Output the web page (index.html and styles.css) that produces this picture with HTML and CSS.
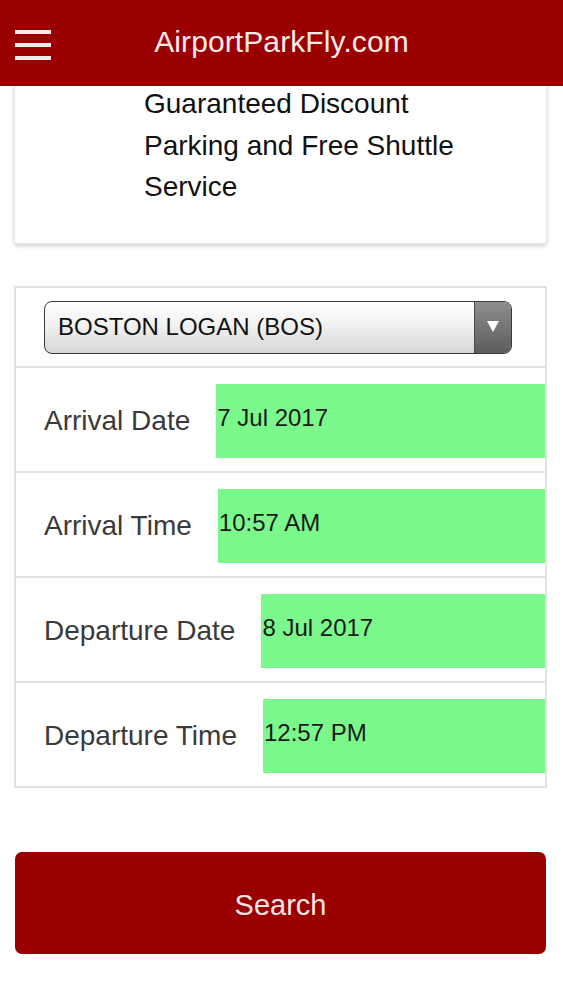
FILE: index.html
```html
<!DOCTYPE html>
<html lang="en">
<head>
    <meta charset="UTF-8">
    <meta name="viewport" content="width=device-width, initial-scale=1.0">
    <title>AirportParkFly.com</title>
    <link rel="stylesheet" href="styles.css">
</head>
<body>
    <header class="topbar">
        <button class="menu-btn" aria-label="Menu">
            <span></span>
            <span></span>
            <span></span>
        </button>
        <div class="brand">AirportParkFly.com</div>
    </header>

    <div class="page">
        <!-- intro card -->
        <div class="intro-card">
            <p class="intro-text">Guaranteed Discount Parking and Free Shuttle Service</p>
        </div>

        <!-- search form -->
        <form class="search-form">
            <div class="select-row">
                <div class="airport-select">
                    <span class="airport-select__value">BOSTON LOGAN (BOS)</span>
                    <span class="airport-select__arrow"></span>
                </div>
            </div>
            <div class="field-row">
                <label class="field-label" for="arrivalDate">Arrival Date</label>
                <input class="field-input" id="arrivalDate" type="text" value="7 Jul 2017" readonly>
            </div>
            <div class="field-row">
                <label class="field-label" for="arrivalTime">Arrival Time</label>
                <input class="field-input" id="arrivalTime" type="text" value="10:57 AM" readonly>
            </div>
            <div class="field-row">
                <label class="field-label" for="departureDate">Departure Date</label>
                <input class="field-input" id="departureDate" type="text" value="8 Jul 2017" readonly>
            </div>
            <div class="field-row">
                <label class="field-label" for="departureTime">Departure Time</label>
                <input class="field-input" id="departureTime" type="text" value="12:57 PM" readonly>
            </div>
        </form>

        <button class="search-btn" type="button">Search</button>
    </div>
</body>
</html>
```

FILE: styles.css
```css
body {
    font-family: "Liberation Sans", Arial, sans-serif;
    margin: 0;
    padding: 0;
    background-color: #fff;
    color: #111;
}

/* header */
.topbar {
    position: relative;
    z-index: 2;
    height: 86px;
    background-color: #9b0000;
    display: grid;
    grid-template-columns: 1fr auto 1fr;
    align-items: center;
}

.menu-btn {
    justify-self: start;
    margin-left: 15px;
    margin-top: 3px;
    padding: 0;
    border: none;
    background: none;
    display: flex;
    flex-direction: column;
    gap: 9px;
    cursor: pointer;
}

.menu-btn span {
    display: block;
    width: 36px;
    height: 4px;
    background-color: #fbe9e9;
}

.brand {
    color: #fbeaea;
    font-size: 30px;
    letter-spacing: 0.1px;
    margin-bottom: 2px;
}

/* content */
.page {
    margin: 0 16px 0 14px;
}

.intro-card {
    position: relative;
    z-index: 1;
    margin-top: -3px;
    padding: 0 40px 35px 129px;
    border: 1px solid #e8e8e8;
    border-top: none;
    border-radius: 0 0 3px 3px;
    box-shadow: 0 2px 4px rgba(0, 0, 0, 0.18);
    background: #fff;
}

.intro-text {
    margin: 0;
    width: 340px;
    font-size: 28px;
    line-height: 41.5px;
    color: #111;
}

.search-form {
    margin-top: 42px;
    border: 2px solid #e2e2e2;
}

.select-row {
    padding: 13px 33px 12px 28px;
}

.airport-select {
    display: flex;
    height: 51px;
    border: 1px solid #3a3a3a;
    border-radius: 8px;
    overflow: hidden;
    background: linear-gradient(#ffffff, #f1f1f1 45%, #d6d6d6);
}

.airport-select__value {
    flex: 1;
    display: flex;
    align-items: center;
    padding-left: 13px;
    font-size: 24px;
    color: #111;
}

.airport-select__arrow {
    width: 36px;
    border-left: 1px solid #4a4a4a;
    background: linear-gradient(#8e8e8e, #5c5c5c);
    display: flex;
    align-items: center;
    justify-content: center;
}

.airport-select__arrow::after {
    content: "";
    border-left: 6px solid transparent;
    border-right: 6px solid transparent;
    border-top: 11px solid #fff;
    margin-top: -2px;
}

.field-row {
    display: flex;
    align-items: center;
    padding: 16px 0 13px 28px;
    border-top: 2px solid #e2e2e2;
}

.field-label {
    margin-right: 26px;
    font-size: 28px;
    color: #3a3a3a;
    white-space: nowrap;
}

.field-input {
    flex: 1;
    min-width: 0;
    height: 74px;
    box-sizing: border-box;
    border: none;
    padding: 0 0 6px 1px;
    margin: 0;
    background-color: #7bf88b;
    font-family: "Liberation Sans", Arial, sans-serif;
    font-size: 24px;
    color: #1a1a1a;
    outline: none;
}

.search-btn {
    display: block;
    width: calc(100% - 2px);
    height: 102px;
    margin: 64px 1px 0;
    padding: 6px 0 0;
    border: none;
    border-radius: 7px;
    background-color: #9b0000;
    color: #fbe6e6;
    font-family: "Liberation Sans", Arial, sans-serif;
    font-size: 29px;
    cursor: pointer;
}
```
